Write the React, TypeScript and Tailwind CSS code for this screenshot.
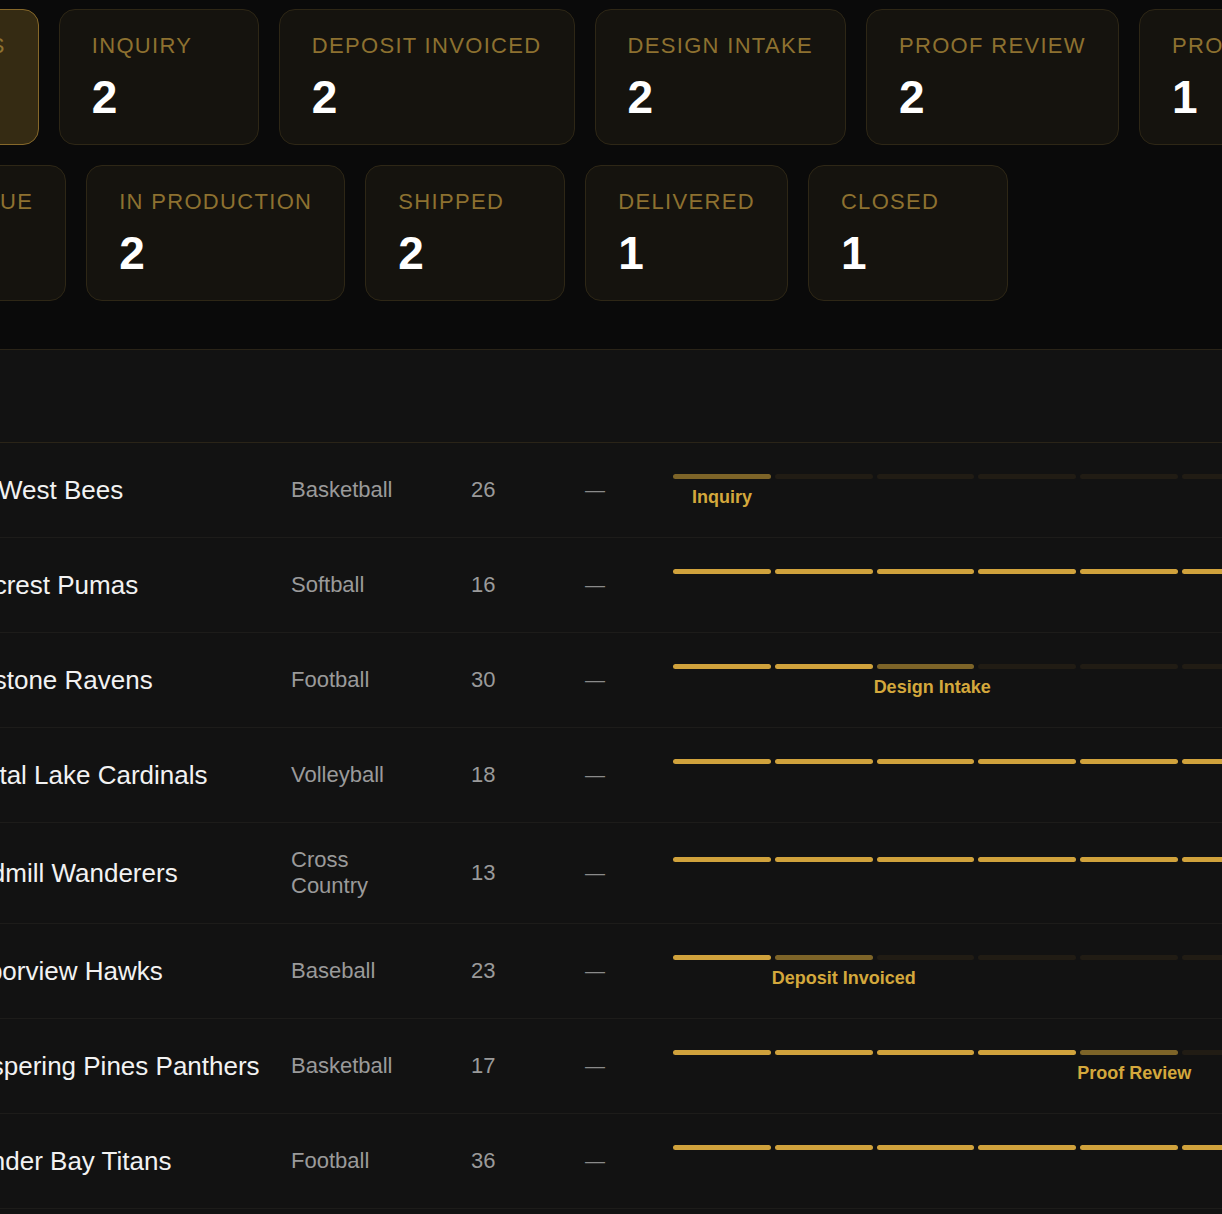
const STAGES = [
  "Inquiry",
  "Deposit Invoiced",
  "Design Intake",
  "Mockup",
  "Proof Review",
  "Proof Approved",
  "Artwork Due",
  "In Production",
  "Shipped",
  "Delivered",
  "Closed",
];

const CARDS = [
  { label: "All Orders", count: 18, active: true },
  { label: "Inquiry", count: 2 },
  { label: "Deposit Invoiced", count: 2 },
  { label: "Design Intake", count: 2 },
  { label: "Proof Review", count: 2 },
  { label: "Proof Approved", count: 1 },
  { label: "Artwork Due", count: 1 },
  { label: "In Production", count: 2 },
  { label: "Shipped", count: 2 },
  { label: "Delivered", count: 1 },
  { label: "Closed", count: 1 },
];

const ORDERS = [
  { team: "Key West Bees", sport: "Basketball", qty: 26, stage: 0 },
  { team: "Oakcrest Pumas", sport: "Softball", qty: 16, stage: 7 },
  { team: "Redstone Ravens", sport: "Football", qty: 30, stage: 2 },
  { team: "Crystal Lake Cardinals", sport: "Volleyball", qty: 18, stage: 8 },
  { team: "Windmill Wanderers", sport: "Cross Country", qty: 13, stage: 9 },
  { team: "Harborview Hawks", sport: "Baseball", qty: 23, stage: 1 },
  { team: "Whispering Pines Panthers", sport: "Basketball", qty: 17, stage: 4 },
  { team: "Thunder Bay Titans", sport: "Football", qty: 36, stage: 8 },
  { team: "Silver Creek Stallions", sport: "Soccer", qty: 22, stage: 5 },
];

function StageCard(props: { label: string; count: number; active?: boolean }) {
  return (
    <div
      className={
        props.active
          ? "min-w-[200px] rounded-[16px] border border-[#86682a] bg-[#352b13] px-8 pb-[24px] pt-[22px]"
          : "min-w-[200px] rounded-[16px] border border-[#2e2716] bg-[#15130e] px-8 pb-[24px] pt-[22px]"
      }
    >
      <p className="whitespace-nowrap text-[22px] uppercase leading-[28px] tracking-[0.06em] text-[#8d7130]">
        {props.label}
      </p>
      <p className="mt-[14px] text-[46px] font-bold leading-[46px] text-white">
        {props.count}
      </p>
    </div>
  );
}

function StageProgress(props: { stage: number }) {
  return (
    <div className="h-[46px] w-[1116px] pt-[7px]">
      <div className="grid h-[5px] grid-cols-11 gap-[4px]">
        {STAGES.map((s, i) => (
          <div
            key={s}
            className={
              i < props.stage
                ? "rounded-full bg-[#d0a23c]"
                : i === props.stage
                  ? "rounded-full bg-[#7d6428]"
                  : "rounded-full bg-[#211c14]"
            }
          />
        ))}
      </div>
      <div className="mt-[6px] grid grid-cols-11 gap-[4px]">
        <p
          className="-mx-[3px] whitespace-nowrap text-center text-[18px] font-bold leading-[24px] text-[#d4a83c]"
          style={{ gridColumnStart: props.stage + 1 }}
        >
          {STAGES[props.stage]}
        </p>
      </div>
    </div>
  );
}

export default function App() {
  return (
    <div className="h-[1214px] w-[1222px] overflow-hidden bg-[#121212] font-['Liberation_Sans',Arial,sans-serif]">
      <div className="-ml-[179px] w-[2200px]">
        <section className="h-[350px] border-b border-[#2a2418] bg-[#0a0a0a] pt-[9px]">
          <div className="flex w-[1700px] flex-wrap gap-5">
            {CARDS.map((c) => (
              <StageCard key={c.label} {...c} />
            ))}
          </div>
        </section>

        <section className="ml-[105px]">
          <div className="h-[93px] border-b border-[#2a2418]" />
          {ORDERS.map((o) => (
            <div
              key={o.team}
              className="flex items-center border-b border-[#1d1c1a] py-6"
            >
              <div className="w-[345px] shrink-0 whitespace-nowrap px-5 text-[26px] leading-[30px] text-[#f2f2f2]">
                {o.team}
              </div>
              <div className="w-[180px] shrink-0 px-5 text-[22px] leading-[26px] text-[#9a9a9a]">
                {o.sport}
              </div>
              <div className="w-[114px] shrink-0 px-5 text-[22px] leading-[26px] text-[#9a9a9a]">
                {o.qty}
              </div>
              <div className="w-[88px] shrink-0 px-5 text-[20px] leading-[26px] text-[#8a8a8a]">
                —
              </div>
              <div className="shrink-0 px-5">
                <StageProgress stage={o.stage} />
              </div>
            </div>
          ))}
        </section>
      </div>
    </div>
  );
}
